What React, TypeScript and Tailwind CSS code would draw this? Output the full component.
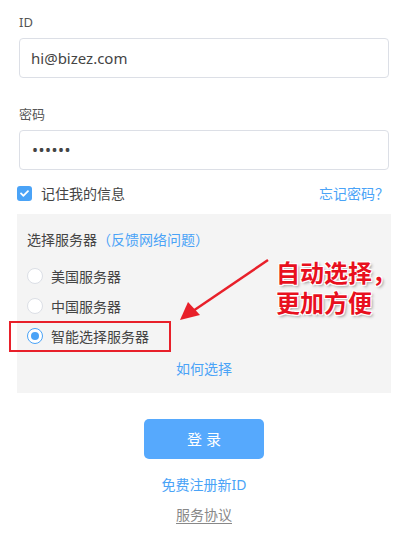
import { FaCheck } from "react-icons/fa";

const font = { fontFamily: '"Noto Sans", "Noto Sans CJK SC", sans-serif' };
const cjk = { fontFamily: '"Noto Sans CJK SC", sans-serif' };

function Radio({ label, checked }: { label: string; checked?: boolean }) {
  return (
    <div className="flex items-center h-[30px] gap-[8px]">
      {checked ? (
        <span className="w-[16px] h-[16px] rounded-full border border-[#4aa3f7] bg-white flex items-center justify-center">
          <span className="w-[8px] h-[8px] rounded-full bg-[#4aa3f7]"></span>
        </span>
      ) : (
        <span className="w-[16px] h-[16px] rounded-full border border-[#dcdfe6] bg-white"></span>
      )}
      <span className="text-[14px] text-[#444]">{label}</span>
    </div>
  );
}

export default function App() {
  return (
    <div className="relative w-[406px] h-[556px] bg-white pl-[19px] pr-[17px] pt-[13px] overflow-hidden" style={font}>
      {/* id */}
      <div className="text-[13px] leading-[18px] text-[#555]">ID</div>
      <div className="mt-[7px] h-[40px] rounded-[4px] border border-[#dcdfe6] px-[11px] flex items-center text-[15px] text-[#444]">
        hi@bizez.com
      </div>

      {/* password */}
      <div className="mt-[27px] text-[13px] leading-[18px] text-[#555]">密码</div>
      <div className="mt-[7px] h-[40px] rounded-[4px] border border-[#dcdfe6] px-[12px] flex items-center text-[16px] text-[#444] tracking-[0.5px]">
        ••••••
      </div>

      {/* remember */}
      <div className="mt-[14px] -ml-[2px] h-[18px] flex items-center justify-between">
        <div className="flex items-center gap-[9px]">
          <span className="w-[15px] h-[15px] rounded-[3px] bg-[#4aa3f7] flex items-center justify-center text-white text-[9px]">
            <FaCheck />
          </span>
          <span className="text-[14px] text-[#444]">记住我的信息</span>
        </div>
        <span className="text-[14px] text-[#4aa3f7]" style={cjk}>忘记密码？</span>
      </div>

      {/* server panel */}
      <div className="mt-[12px] -mx-[2px] bg-[#f4f4f4] px-[10px] pt-[17px] pb-[15px]">
        <div className="text-[14px] leading-[18px] text-[#444]">
          选择服务器<span className="text-[#4aa3f7]">（反馈网络问题）</span>
        </div>
        <div className="mt-[12px]">
          <Radio label="美国服务器" />
          <Radio label="中国服务器" />
          <Radio label="智能选择服务器" checked />
        </div>
        <div className="mt-[9px] text-center text-[14px] leading-[18px] text-[#4aa3f7]">如何选择</div>
      </div>

      {/* actions */}
      <div className="flex flex-col items-center">
        <button className="mt-[26px] w-[120px] h-[40px] rounded-[5px] bg-[#56a9fd] text-white text-[15px] tracking-[4px] pl-[4px]">
          登录
        </button>
        <div className="mt-[16px] text-[14px] leading-[20px] text-[#4aa3f7]">免费注册新ID</div>
        <div className="mt-[10px] text-[14px] leading-[20px] text-[#888] underline underline-offset-[3px]">服务协议</div>
      </div>

      {/* annotation overlay */}
      <div className="absolute left-[9px] top-[321px] w-[162px] h-[31px] border-2 border-[#e8202a]"></div>
      <svg className="absolute left-0 top-0" width="406" height="556" viewBox="0 0 406 556">
        <line x1="268" y1="260" x2="193" y2="311" stroke="#e8202a" strokeWidth="2.5" />
        <polygon points="180,320 188,302 200,315" fill="#e8202a" />
      </svg>
      <div className="absolute left-[276px] top-[257px] text-[24px] leading-[30px] font-bold text-[#e8101e] [text-shadow:_0_0_2px_#fff,_0_0_2px_#fff,_1px_1px_0_#fff,_-1px_-1px_0_#fff,_1px_-1px_0_#fff,_-1px_1px_0_#fff,_2px_2px_3px_#999]" style={cjk}>
        <div>自动选择，</div>
        <div>更加方便</div>
      </div>
    </div>
  );
}
